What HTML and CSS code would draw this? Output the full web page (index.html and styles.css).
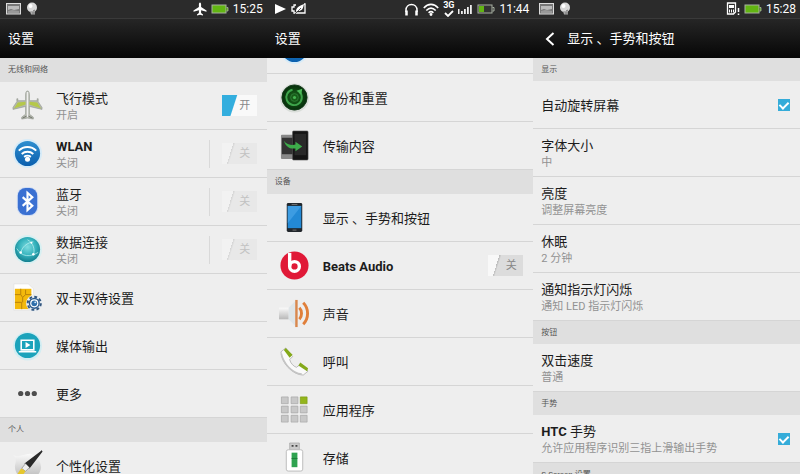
FILE: index.html
```
<!DOCTYPE html>
<html lang="zh-CN">
<head>
  <meta charset="UTF-8" />
  <meta name="viewport" content="width=device-width, initial-scale=1.0" />
  <title>设置</title>
  <link rel="stylesheet" href="styles.css">
</head>
<body>
  <!-- Shared icons -->
  <svg class="defs" aria-hidden="true">
    <defs>
      <linearGradient id="blue" x1="0" y1="0" x2="0" y2="1">
        <stop offset="0" stop-color="#2f8fd0" /><stop offset="1" stop-color="#0a5fae" />
      </linearGradient>
      <linearGradient id="grey" x1="0" y1="0" x2="0" y2="1">
        <stop offset="0" stop-color="#fafafa" /><stop offset="1" stop-color="#b8b8b8" />
      </linearGradient>
      <radialGradient id="globe" cx=".5" cy=".4" r=".6">
        <stop offset="0" stop-color="#7fdce0" /><stop offset=".55" stop-color="#36b3bd" /><stop offset="1" stop-color="#14808f" />
      </radialGradient>
      <radialGradient id="radar">
        <stop offset="0" stop-color="#1c6b1c" /><stop offset="1" stop-color="#062d0b" />
      </radialGradient>
      <symbol id="picture" viewBox="0 0 16 12">
        <rect x=".5" y=".5" width="14" height="10.5" fill="#777" stroke="#ddd" />
        <path d="M2 3h11v3L8 7 5 6 2 7z" fill="#bbb" />
        <path d="M2 8l4-1 7 1v2H2z" fill="#999" />
      </symbol>
      <symbol id="bulb" viewBox="0 0 12 14">
        <circle cx="6" cy="5.5" r="5" fill="#d8d8d8" />
        <circle cx="4.500" cy="4" r="2" fill="#fff" />
        <path d="M4 9h5v3.500H5z" fill="#aaa" />
        <path d="M7 9l2-1M6 11h3" stroke="#777" />
      </symbol>
      <symbol id="battery-full" viewBox="0 0 18 11">
        <rect x="1" y="1" width="14" height="8" fill="#62b512" stroke="#a9b2a3" />
        <path d="M15.500 3.500h1.500v3.500h-1.500" fill="#62b512" stroke="#a9b2a3" stroke-width=".8" />
      </symbol>
    </defs>
  </svg>

  <main class="phones">
    <section class="phone">
      <div class="status-bar">
        <svg width="16" height="12"><use href="#picture" /></svg>
        <svg width="12" height="14"><use href="#bulb" /></svg>
        <span class="spacer"></span>
        <svg width="14" height="14" viewBox="0 0 14 14" fill="#fff"><path d="M7 .5c.8 0 1.100 1 1.100 2v2.500l5.400 3.500v1.300L8.100 8.300v2.700l1.900 1.400v1L7 12.700l-3 .7v-1l1.900-1.400V8.300L.5 9.800V8.500l5.400-3.500V2.500c0-1 .3-2 1.100-2z" /></svg>
        <svg class="battery" width="18" height="11"><use href="#battery-full" /></svg>
        <time>15:25</time>
      </div>
      <header class="title-bar"><h1>设置</h1></header>
      <div class="list">
        <h2 class="group">无线和网络</h2>
        <div class="row">
          <svg class="icon" viewBox="0 0 32 32">
            <path d="M16 1c1.500 0 2 2 2 4v6h8V9h1v3l4 6v2l-13-3v8l4 3v2l-6-1-6 1v-2l4-3v-8L1 20v-2l4-6V9h1v2h8V5c0-2 .5-4 2-4z" fill="#b4b8ad" stroke="#8f938a" stroke-width=".6" />
            <path d="M14 12l-8 1-4 6 12-4zM18 12l8 1 4 6-12-4z" fill="#b5c84a" />
            <path d="M16 2v26" stroke="#efefef" stroke-width="1.600" />
            <path d="M11 29l4-2M21 29l-4-2" stroke="#6d7168" />
          </svg>
          <div class="label"><h3>飞行模式</h3><p>开启</p></div>
          <button class="switch on" type="button" role="switch" aria-checked="true" aria-label="飞行模式"><span>开</span></button>
        </div>
        <div class="row">
          <svg class="icon" viewBox="0 0 32 32">
            <circle cx="16" cy="16" r="15" fill="#d6ebf8" />
            <circle cx="16" cy="16" r="13" fill="url(#blue)" />
            <path d="M7 13c5-5 13-5 18 0M10 16.500c3.500-3 8.500-3 12 0M12.500 19.500c2-1.500 5-1.500 7 0" fill="none" stroke="#fff" stroke-width="2" />
            <circle cx="16" cy="22" r="2.600" fill="#fff" />
          </svg>
          <div class="label"><h3><b>WLAN</b></h3><p>关闭</p></div>
          <span class="divider"></span>
          <button class="switch dim" type="button" role="switch" aria-checked="false" aria-label="WLAN"><span>关</span></button>
        </div>
        <div class="row">
          <svg class="icon" viewBox="0 0 32 32">
            <rect x="5" y="1" width="22" height="30" rx="9" fill="#cfdcf3" />
            <rect x="6" y="2" width="20" height="28" rx="8" fill="#3a70d2" />
            <path d="M11 11.500l10 9-5 4.500V7l5 4.500-10 9" fill="none" stroke="#fff" stroke-width="2.200" />
          </svg>
          <div class="label"><h3>蓝牙</h3><p>关闭</p></div>
          <span class="divider"></span>
          <button class="switch dim" type="button" role="switch" aria-checked="false" aria-label="蓝牙"><span>关</span></button>
        </div>
        <div class="row">
          <svg class="icon" viewBox="0 0 32 32">
            <circle cx="16" cy="16" r="15" fill="#d8f0f2" />
            <circle cx="16" cy="16" r="13" fill="url(#globe)" />
            <path d="M5 15c5 9 14 9 22 4M9 20c1-7 7-11 13-12M16 6c6 3 8 10 6 16" fill="none" stroke="#c4f3f4" stroke-width=".7" />
            <circle cx="9" cy="19" r="1.300" fill="#fff" /><circle cx="22" cy="21" r="1.300" fill="#fff" /><circle cx="20" cy="9" r="1" fill="#fff" />
          </svg>
          <div class="label"><h3>数据连接</h3><p>关闭</p></div>
          <span class="divider"></span>
          <button class="switch dim" type="button" role="switch" aria-checked="false" aria-label="数据连接"><span>关</span></button>
        </div>
        <div class="row">
          <svg class="icon" viewBox="0 0 32 32">
            <path d="M2 2h15l5 5v22H2z" fill="#fff" stroke="#ddd" stroke-width=".6" />
            <path d="M3 7h17v21H3z" fill="#f3b90c" />
            <path d="M3 13h6v-6M3 21h7v7M20 13h-6V8M9 13l2 3v5M14 13l-3 3" fill="none" stroke="#b98208" />
            <circle cx="23" cy="22" r="7" fill="none" stroke="#e8edf2" stroke-width="3" />
            <circle cx="23" cy="22" r="6.800" fill="none" stroke="#33567e" stroke-width="2" stroke-dasharray="3 2.300" />
            <circle cx="23" cy="22" r="5" fill="#fff" stroke="#2c5c91" stroke-width="1.500" />
            <circle cx="23" cy="22" r="3" fill="#2f6fab" /><circle cx="24" cy="21" r="1" fill="#d5eafa" />
          </svg>
          <div class="label"><h3>双卡双待设置</h3></div>
        </div>
        <div class="row">
          <svg class="icon" viewBox="0 0 32 32">
            <circle cx="16" cy="16.500" r="15" fill="#d3edf2" />
            <circle cx="16" cy="16" r="13" fill="#1ba3bb" />
            <path d="M9.500 10.500h13v10h-13zM7 22.500h18" fill="none" stroke="#fff" stroke-width="1.600" />
            <path d="M14 12.500v6l5-3z" fill="#fff" />
          </svg>
          <div class="label"><h3>媒体输出</h3></div>
        </div>
        <div class="row">
          <svg class="icon" viewBox="0 0 32 32" fill="#4d4d4d"><circle cx="9" cy="16" r="2.700" /><circle cx="16" cy="16" r="2.700" /><circle cx="23" cy="16" r="2.700" /></svg>
          <div class="label"><h3>更多</h3></div>
        </div>
        <h2 class="group">个人</h2>
        <div class="row">
          <svg class="icon" viewBox="0 0 32 32">
            <path d="M1 5c6 4 12-2 19-1 6 2 10 8 10 14-1 8-7 12-14 12C8 30 3 24 3 17c0-4 3-6-2-12z" fill="url(#grey)" />
            <path d="M31 1L14 14l4 4z" fill="#2a2a2a" stroke="#2a2a2a" stroke-width="1.500" />
            <path d="M14 14l4 4-4 4-4-3z" fill="#eee" stroke="#777" stroke-width=".6" />
            <path d="M10 19l4 3-3 4-7 2c2-3 3-7 6-9z" fill="#e6c72e" />
          </svg>
          <div class="label"><h3>个性化设置</h3></div>
        </div>
      </div>
    </section>

    <section class="phone">
      <div class="status-bar">
        <svg width="14" height="12" viewBox="0 0 14 12" fill="#fff"><path d="M2 1l11 5L2 11z" /></svg>
        <svg width="16" height="12" viewBox="0 0 16 12" fill="none" stroke="#fff" stroke-width="1.300"><path d="M5 2H3v2H1v4h2v2h2M13 1h1v9H5" /><path d="M5 9c0-5 3-5.500 8-8-1 5-2 7-6 7z" fill="#fff" stroke="none" /><path d="M4 11l6-6" stroke="#333" stroke-width=".8" /></svg>
        <span class="spacer"></span>
        <svg width="15" height="13" viewBox="0 0 15 13" fill="none" stroke="#fff"><path d="M2 9V7c0-3.500 2.500-5.500 5.500-5.500S13 3.500 13 7v2" stroke-width="1.500" /><path d="M2.500 7.500v5M12.500 7.500v5" stroke-width="2.500" /></svg>
        <svg width="16" height="13" viewBox="0 0 16 13" fill="none" stroke="#fff" stroke-width="1.600"><path d="M.8 5C5 .2 11 .2 15.200 5M3.300 7.500c3-3 6.400-3 9.400 0M5.600 9.800c1.500-1.400 3.300-1.400 4.800 0" /><circle cx="8" cy="11.500" r="1.400" fill="#fff" stroke="none" /></svg>
        <span class="network">3G<svg width="10" height="7" viewBox="0 0 10 7" fill="none" stroke="#fff" stroke-width="1.800"><path d="M1 3l3 3 5-5" /></svg></span>
        <svg width="15" height="11" viewBox="0 0 15 11" fill="#eee"><path d="M0 5h1.500v5H0zM3 7h1.800v3H3zM6 5h1.800v5H6zM9 3h1.800v7H9zM12 1h1.800v9H12z" /></svg>
        <svg class="battery" width="18" height="11" viewBox="0 0 18 11"><rect x="1" y="1" width="14" height="8" fill="#333" stroke="#a9b2a3" /><path d="M2 2h5v6H2z" fill="#62b512" /><path d="M15.500 3.500h1.500v3.500h-1.500" fill="none" stroke="#a9b2a3" /></svg>
        <time>11:44</time>
      </div>
      <header class="title-bar"><h1>设置</h1></header>
      <div class="list scrolled">
        <div class="row">
          <svg class="icon" viewBox="0 0 32 32"><circle cx="16" cy="16" r="15" fill="#d6ebf8" /><circle cx="16" cy="16" r="13" fill="url(#blue)" /></svg>
        </div>
        <div class="row">
          <svg class="icon" viewBox="0 0 32 32">
            <circle cx="16" cy="16.500" r="15" fill="#d9ddd9" />
            <circle cx="16" cy="16" r="13" fill="url(#radar)" stroke="#173c1c" />
            <path d="M21 10a8 8 0 1 1-7-2" fill="none" stroke="#3ea54b" stroke-width="2" />
            <path d="M18 9l6-2-1 6z" fill="#4dbb59" />
            <circle cx="16" cy="16" r="4" fill="none" stroke="#2c7b35" /><circle cx="16" cy="16" r="1.600" fill="#46b552" />
          </svg>
          <div class="label"><h3>备份和重置</h3></div>
        </div>
        <div class="row">
          <svg class="icon" viewBox="0 0 32 32">
            <rect x="2" y="5" width="15" height="25" rx="1" fill="#888" /><path d="M3 8h13v17H3z" fill="#333" />
            <rect x="14" y="1" width="16" height="30" rx="1" fill="#151515" stroke="#555" stroke-width=".6" /><path d="M16 4h12v22H16z" fill="#292929" />
            <path d="M5 11c3 4 8 5 12 4v-3l7 5-7 5v-3C11 20 7 17 5 11z" fill="#3dac4a" />
          </svg>
          <div class="label"><h3>传输内容</h3></div>
        </div>
        <h2 class="group">设备</h2>
        <div class="row">
          <svg class="icon" viewBox="0 0 32 32">
            <rect x="8" y="1" width="16" height="30" rx="1.500" fill="#22272c" />
            <path d="M9 4h14v23H9z" fill="#2389d5" /><path d="M9 4h14L9 22z" fill="#3d9ce2" />
            <path d="M13 2.500h6M14 29h4" stroke="#777" />
          </svg>
          <div class="label"><h3>显示 、手势和按钮</h3></div>
        </div>
        <div class="row">
          <svg class="icon" viewBox="0 0 32 32">
            <circle cx="16" cy="16" r="14.500" fill="#e01937" />
            <circle cx="16" cy="17" r="5" fill="none" stroke="#fff" stroke-width="3.500" />
            <path d="M11 3v14" stroke="#fff" stroke-width="3.500" />
          </svg>
          <div class="label"><h3><b>Beats Audio</b></h3></div>
          <button class="switch" type="button" role="switch" aria-checked="false" aria-label="Beats Audio"><span>关</span></button>
        </div>
        <div class="row">
          <svg class="icon" viewBox="0 0 32 32">
            <path d="M0 10h10v12H0z" fill="url(#grey)" /><path d="M10 10l8-8v28l-8-8z" fill="#dfe5e8" />
            <path d="M18 2v28" stroke="#d9884e" stroke-width="2.500" />
            <path d="M21 10c3 3 3 9 0 12M25 5c6 6 6 16 0 22" fill="none" stroke="#e07f3a" stroke-width="3" />
          </svg>
          <div class="label"><h3>声音</h3></div>
        </div>
        <div class="row">
          <svg class="icon" viewBox="0 0 32 32">
            <path d="M7 2L2 6c0 11 12 24 23 24l5-4-8-7-4 3c-3-1-6-4-7-8l3-3z" fill="#fafafa" stroke="#aaa" stroke-width=".8" />
            <path d="M2.500 8c2 10 11 20 21 21" fill="none" stroke="#c4c4c4" stroke-width="1.500" />
            <path d="M7 2l7 7-3 3-6-8zM22 17l8 6-1 3-9-6z" fill="#84a91a" />
          </svg>
          <div class="label"><h3>呼叫</h3></div>
        </div>
        <div class="row">
          <svg class="icon" viewBox="0 0 32 32" fill="#c8c8c8" stroke="#a5a5a5" stroke-width=".7">
            <path d="M2.500 3h7v7h-7zM12.500 3h7v7h-7zM2.500 12.500h7v7h-7zM12.500 12.500h7v7h-7zM22 12.500h7v7h-7zM2.500 22h7v7h-7zM12.500 22h7v7h-7zM22 22h7v7h-7z" />
            <path d="M22 3h7v7h-7z" fill="#93b51c" stroke="#7b9a12" />
          </svg>
          <div class="label"><h3>应用程序</h3></div>
        </div>
        <div class="row">
          <svg class="icon" viewBox="0 0 32 32">
            <path d="M11 1h10v7H11z" fill="#ccc" stroke="#999" stroke-width=".6" /><path d="M13 3h2v2h-2zM17 3h2v2h-2z" fill="#444" />
            <rect x="7.500" y="8" width="17" height="22" rx="2" fill="#fff" stroke="#bbb" />
            <path d="M13 11h6v15h-6z" fill="#2fa350" /><path d="M13 17h6" stroke="#1d7a38" />
          </svg>
          <div class="label"><h3>存储</h3></div>
        </div>
      </div>
    </section>

    <section class="phone">
      <div class="status-bar">
        <svg width="16" height="12"><use href="#picture" /></svg>
        <svg width="12" height="14"><use href="#bulb" /></svg>
        <span class="spacer"></span>
        <svg width="14" height="14" viewBox="0 0 14 14"><path d="M1.500 1h8v9l-2 2h-6z" fill="none" stroke="#fff" stroke-width="1.300" /><path d="M3 3h5v3H3z" fill="#fff" /><path d="M3.500 7.500v3M5.500 7.500v3M7.500 7.500v3" stroke="#fff" /><path d="M12.500 6v4M12.500 11.500v1.500" stroke="#fff" stroke-width="1.500" /></svg>
        <svg class="battery" width="18" height="11"><use href="#battery-full" /></svg>
        <time>15:28</time>
      </div>
      <header class="title-bar">
        <button class="back" type="button" aria-label="返回"><svg width="10" height="16" viewBox="0 0 10 16" fill="none" stroke="#fff" stroke-width="2"><path d="M8.500 2L2 8l6.500 6" /></svg></button>
        <h1>显示 、手势和按钮</h1>
      </header>
      <div class="list detail">
        <h2 class="group">显示</h2>
        <div class="row">
          <label class="label" for="rotate"><span class="name">自动旋转屏幕</span></label>
          <input class="check" type="checkbox" id="rotate" checked>
        </div>
        <div class="row"><div class="label"><h3>字体大小</h3><p>中</p></div></div>
        <div class="row"><div class="label"><h3>亮度</h3><p>调整屏幕亮度</p></div></div>
        <div class="row"><div class="label"><h3>休眠</h3><p>2 分钟</p></div></div>
        <div class="row"><div class="label"><h3>通知指示灯闪烁</h3><p>通知 LED 指示灯闪烁</p></div></div>
        <h2 class="group">按钮</h2>
        <div class="row"><div class="label"><h3>双击速度</h3><p>普通</p></div></div>
        <h2 class="group">手势</h2>
        <div class="row">
          <label class="label" for="gesture"><span class="name"><b>HTC</b> 手势</span><span class="note">允许应用程序识别三指上滑输出手势</span></label>
          <input class="check" type="checkbox" id="gesture" checked>
        </div>
        <h2 class="group">S-Screen 设置</h2>
      </div>
    </section>
  </main>
</body>
</html>
```
FILE: styles.css
```
* { margin: 0; padding: 0; box-sizing: border-box; }

body {
  font-family: Roboto, "Noto Sans CJK SC", sans-serif;
  background-color: #eee;
  color: #1c1c1c;
  overflow: hidden;
}

svg { display: block; flex-shrink: 0; }
.defs { position: absolute; width: 0; height: 0; }

.phones {
  display: grid;
  grid-template-columns: repeat(3, 1fr);
  height: 100vh;
}

.phone {
  min-width: 0;
  overflow: hidden;
  display: flex;
  flex-direction: column;
}

/* Top bars */
.status-bar {
  flex: none;
  height: 18px;
  padding: 0 4px 0 6px;
  display: flex;
  align-items: center;
  gap: 4px;
  background-color: #2b2b2b;
  color: #fff;
  position: relative;
  z-index: 1;
}

.status-bar time {
  font-size: 12px;
  line-height: 18px;
}

.spacer { flex: 1; }

.network {
  display: flex;
  flex-direction: column;
  align-items: center;
  font-size: 9px;
  font-weight: bold;
  line-height: 9px;
}

.title-bar {
  flex: none;
  height: 40px;
  padding: 0 8px;
  display: flex;
  align-items: center;
  background: linear-gradient(#262626, #060606);
  border-top: 1px solid #3a3a3a;
  color: #fff;
  position: relative;
  z-index: 1;
}

.title-bar h1 {
  font-size: 13px;
  font-weight: normal;
  line-height: 20px;
}

.back {
  width: 26px;
  height: 24px;
  padding-left: 4px;
  background: none;
  border: none;
  display: flex;
  align-items: center;
  cursor: pointer;
}

/* Settings list */
.list {
  flex: 1;
  min-height: 0;
}

.scrolled { margin-top: -32px; }

.group {
  height: 24px;
  padding: 0 8px;
  background-color: #dfdfdf;
  color: #555;
  font-size: 8px;
  font-weight: normal;
  line-height: 24px;
}

.detail .group {
  height: 23px;
  line-height: 23px;
}

.row {
  height: 48px;
  padding: 0 10px 0 8px;
  display: flex;
  align-items: center;
  background-color: #eee;
  border-bottom: 1px solid #d5d5d5;
}

.icon {
  width: 31px;
  height: 31px;
  margin: 0 13px 0 4px;
}

.label {
  flex: 1;
  min-width: 0;
  padding-top: 2px;
  white-space: nowrap;
}

.label h3,
.name {
  display: block;
  font-size: 13px;
  font-weight: normal;
  line-height: 18px;
}

.label p,
.note {
  display: block;
  color: #929292;
  font-size: 11px;
  line-height: 16px;
}

.divider {
  width: 1px;
  height: 28px;
  margin-right: 12px;
  background-color: #d9d9d9;
}

.switch {
  width: 35px;
  height: 21px;
  padding-left: 11px;
  border: none;
  background: linear-gradient(108deg, #f8f8f8 11px, #bbb 11px, #dcdcdc 13px);
  color: #888;
  font-family: inherit;
  font-size: 11px;
  line-height: 21px;
  cursor: pointer;
}

.switch.on { background: linear-gradient(108deg, #33aede 14px, #f9f9f9 15px); }

.switch.dim {
  background: linear-gradient(108deg, #f2f2f2 11px, #d5d5d5 11px, #e8e8e8 13px);
  color: #c2c2c2;
}

.check {
  appearance: none;
  width: 12px;
  height: 12px;
  background-color: #35acd9;
  cursor: pointer;
}

.check:checked::before {
  content: "";
  display: block;
  width: 4px;
  height: 7px;
  margin: 1px auto;
  border: solid #fff;
  border-width: 0 2px 2px 0;
  transform: rotate(45deg);
}
```
